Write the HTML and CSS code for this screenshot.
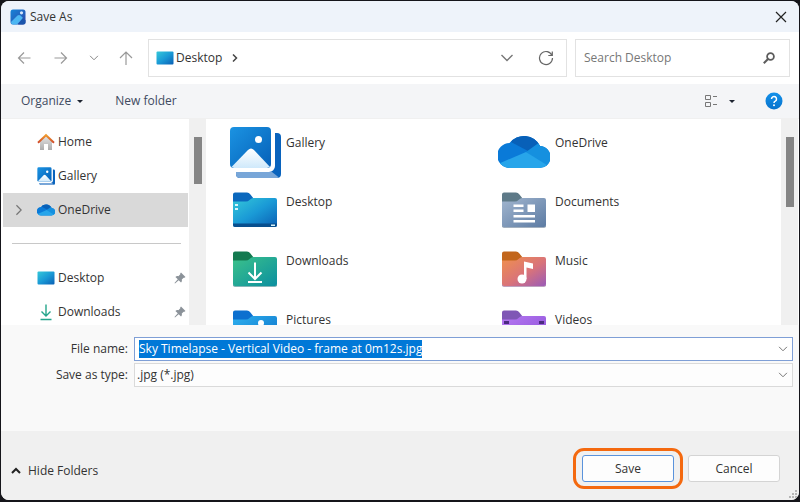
FILE: index.html
```html
<!DOCTYPE html>
<html lang="en">
<head>
<meta charset="utf-8">
<meta name="viewport" content="width=device-width, initial-scale=1">
<title>Save As</title>
<link rel="stylesheet" href="styles.css">
</head>
<body>
<svg class="defs" width="0" height="0" aria-hidden="true">
  <defs>
    <linearGradient id="g-app" x1="0" y1="0" x2="1" y2="1"><stop offset="0" stop-color="#1684d8"/><stop offset=".6" stop-color="#2460bd"/><stop offset="1" stop-color="#3b3f9e"/></linearGradient>
    <linearGradient id="g-desk" x1="0" y1="0" x2="1" y2="1"><stop offset="0" stop-color="#35c8d9"/><stop offset=".5" stop-color="#1a9ad6"/><stop offset="1" stop-color="#0a5fb4"/></linearGradient>
    <linearGradient id="g-photo" x1="0" y1="0" x2="1" y2="1"><stop offset="0" stop-color="#1b93e2"/><stop offset="1" stop-color="#0560b8"/></linearGradient>
    <linearGradient id="g-hill" x1="0" y1="0" x2="0" y2="1"><stop offset="0" stop-color="#ffffff"/><stop offset="1" stop-color="#cfe9fb"/></linearGradient>
    <linearGradient id="g-down" x1="0" y1="0" x2="1" y2="1"><stop offset="0" stop-color="#3cc28a"/><stop offset="1" stop-color="#0b8fa0"/></linearGradient>
    <linearGradient id="g-pic" x1="0" y1="0" x2="1" y2="1"><stop offset="0" stop-color="#2fb0ee"/><stop offset="1" stop-color="#0a70c8"/></linearGradient>
    <linearGradient id="g-doc" x1="0" y1="0" x2="1" y2="1"><stop offset="0" stop-color="#a2b6cf"/><stop offset="1" stop-color="#5c7ba3"/></linearGradient>
    <linearGradient id="g-music" x1="0" y1="0" x2="1" y2="1"><stop offset="0" stop-color="#f0914c"/><stop offset=".55" stop-color="#d9737a"/><stop offset="1" stop-color="#9a5bb8"/></linearGradient>
    <linearGradient id="g-vid" x1="0" y1="0" x2="1" y2="1"><stop offset="0" stop-color="#b678f2"/><stop offset="1" stop-color="#8a4fd6"/></linearGradient>
    <linearGradient id="g-help" x1="0" y1="0" x2="0" y2="1"><stop offset="0" stop-color="#1391ea"/><stop offset="1" stop-color="#0873cc"/></linearGradient>
    <linearGradient id="g-house" x1="0" y1="0" x2="0" y2="1"><stop offset="0" stop-color="#e4e4e4"/><stop offset="1" stop-color="#acacac"/></linearGradient>
    <linearGradient id="g-roof" x1="0" y1="0" x2="0" y2="1"><stop offset="0" stop-color="#f09a2c"/><stop offset="1" stop-color="#cf4a2c"/></linearGradient>
    <clipPath id="c-cloud"><path d="M12 43a11.500 11.500 0 0 1-.5-25A18 18 0 0 1 42 21A11 11 0 0 1 41 43z"/></clipPath>
    <symbol id="cloud" viewBox="0 1 52 52">
      <g clip-path="url(#c-cloud)">
        <path d="M0 0h52v52H0z" fill="#0a7ad8"/>
        <path d="M13 17L20 4h24v17L30 26z" fill="#0860b8"/>
        <path d="M28 27l14-10 10 4v24z" fill="#1590df"/>
        <path d="M0 39l28-12 24 15v4H0z" fill="#27a5ea"/>
      </g>
    </symbol>
    <symbol id="photos" viewBox="0 0 52 52">
      <path d="M46 7h2a4 4 0 0 1 4 4v37a4 4 0 0 1-4 4H11a4 4 0 0 1-4-4v-2h33a6 6 0 0 0 6-6z" fill="#0963bd"/>
      <path d="M7 46h36l7 5.500-2 .5H11a4 4 0 0 1-4-4z" fill="#78a6d8"/>
      <rect x="1" y="1" width="41" height="41" rx="4" fill="url(#g-photo)"/>
      <path d="M2.500 41L19 24q3-3 6 0l16 17-3 1H5z" fill="url(#g-hill)"/>
      <circle cx="29.500" cy="13.500" r="3.500" fill="#fff"/>
    </symbol>
    <symbol id="screen" viewBox="0 0 18 14"><rect x="0.500" y="0.500" width="17" height="13" rx="1" fill="url(#g-desk)"/></symbol>
    <symbol id="chevron" viewBox="0 0 14 14"><path d="M1.500 4l5.500 5.500L12.500 4" fill="none" stroke="currentColor" stroke-width="1.400"/></symbol>
    <symbol id="pin" viewBox="0 0 12 12"><path d="M7 .5L11.500 5l-1 .8-.8-.1L7.800 7.600c.3 1.300 0 2.200-.8 3L4.700 8.200 1 11.500l-.5-.5 3.300-3.700L1.400 5c.8-.8 1.800-1.100 3-.8L6.300 2.300l-.1-.8z" fill="#8b9299"/></symbol>
  </defs>
</svg>

<div class="dialog">
  <header class="titlebar">
    <svg class="app-icon" viewBox="0 0 16 16" width="16" height="16" aria-hidden="true">
      <rect x=".5" y=".5" width="15" height="15" rx="2.500" fill="url(#g-app)"/>
      <path d="M1 13l6.500-6.500q1.500-1.200 3 0L13 9l-6 6.500H3q-2 0-2-2.500z" fill="#4cb6f2"/>
      <path d="M8 15.500L13 9l2.500 2.500V13q0 2.500-2.500 2.500z" fill="#1a55ac"/>
      <circle cx="11.500" cy="3.800" r="1.600" fill="#d6e6fa"/>
    </svg>
    <h1>Save As</h1>
    <button class="icon-btn close" aria-label="Close">
      <svg viewBox="0 0 12 12" width="12" height="12"><path d="M1 1l10 10M11 1L1 11" stroke="#222" stroke-width="1.200"/></svg>
    </button>
  </header>

  <nav class="navbar" aria-label="Navigation">
    <div class="history">
      <button class="icon-btn" aria-label="Back"><svg viewBox="0 0 14 14" width="14" height="14"><path d="M13.500 7H1.500M7 1.500L1.500 7 7 12.500" fill="none" stroke="#999" stroke-width="1.200"/></svg></button>
      <button class="icon-btn" aria-label="Forward"><svg viewBox="0 0 14 14" width="14" height="14"><path d="M.5 7h12M7 1.500L12.500 7 7 12.500" fill="none" stroke="#999" stroke-width="1.200"/></svg></button>
      <button class="icon-btn recent" aria-label="Recent locations"><svg width="10" height="10"><use href="#chevron"/></svg></button>
      <button class="icon-btn" aria-label="Up"><svg viewBox="0 0 14 14" width="14" height="14"><path d="M7 14V1M1 7l6-6 6 6" fill="none" stroke="#999" stroke-width="1.200"/></svg></button>
    </div>
    <div class="address">
      <svg class="place" width="18" height="14" aria-hidden="true"><use href="#screen"/></svg>
      <a href="#">Desktop</a>
      <svg class="crumb" viewBox="0 0 6 8" width="6" height="8" aria-hidden="true"><path d="M1 .5L4.500 4 1 7.500" fill="none" stroke="#444" stroke-width="1.500"/></svg>
      <button class="icon-btn expand" aria-label="Previous locations"><svg width="14" height="14"><use href="#chevron"/></svg></button>
      <button class="icon-btn" aria-label="Refresh"><svg viewBox="0 0 16 16" width="16" height="16"><path d="M14 5.500A6.500 6.500 0 1 0 14.500 8M14.300 1.500v4h-4" fill="none" stroke="#666" stroke-width="1.200"/></svg></button>
    </div>
    <form class="search">
      <input type="search" placeholder="Search Desktop" aria-label="Search Desktop">
      <svg viewBox="0 0 12 12" width="12" height="12" aria-hidden="true"><circle cx="7.500" cy="4.500" r="3.400" fill="none" stroke="#5c5c5c" stroke-width="1.800"/><path d="M5 7L.8 11.200" stroke="#5c5c5c" stroke-width="2"/></svg>
    </form>
  </nav>

  <div class="toolbar">
    <button class="organize">Organize<span class="caret"></span></button>
    <button>New folder</button>
    <button class="view" aria-label="Change view">
      <svg viewBox="0 0 14 14" width="14" height="14"><path d="M1.500 1.500h5v4h-5zM1.500 8.500h5v4h-5z" fill="none" stroke="#777"/><path d="M9 2.500h4M9 10.500h4" stroke="#777"/></svg>
      <span class="caret"></span>
    </button>
    <button class="help" aria-label="Help">
      <svg viewBox="0 0 18 18" width="18" height="18"><circle cx="9" cy="9" r="8.500" fill="url(#g-help)"/><path d="M6.500 7a2.500 2.500 0 1 1 3.800 2.100Q9 9.800 9 11" fill="none" stroke="#fff" stroke-width="1.500"/><circle cx="9" cy="13.300" r="1" fill="#fff"/></svg>
    </button>
  </div>

  <div class="browser">
    <aside class="sidebar">
      <ul class="tree">
        <li><a href="#">
          <svg viewBox="0 0 18 18" width="18" height="18" aria-hidden="true"><path d="M3 8.500L9 3l6 5.500V17h-4v-6H7v6H3z" fill="url(#g-house)"/><path d="M1 9.800L9 2.200l8 7.600" fill="none" stroke="url(#g-roof)" stroke-width="2"/></svg>
          Home</a></li>
        <li><a href="#"><svg width="18" height="18" aria-hidden="true"><use href="#photos"/></svg>Gallery</a></li>
        <li class="selected"><a href="#"><svg class="twist" width="12" height="12" aria-hidden="true"><use href="#chevron"/></svg><svg width="18" height="18" aria-hidden="true"><use href="#cloud"/></svg>OneDrive</a></li>
        <li class="divider" role="separator"></li>
        <li><a href="#"><svg width="18" height="14" aria-hidden="true"><use href="#screen"/></svg>Desktop<svg class="pin" width="12" height="12" aria-hidden="true"><use href="#pin"/></svg></a></li>
        <li><a href="#">
          <svg viewBox="0 0 18 18" width="18" height="18" aria-hidden="true"><path d="M9 1.500v11M4.500 8.500L9 13l4.500-4.500M3.500 16.500h11" fill="none" stroke="#25a58b" stroke-width="1.400"/></svg>
          Downloads<svg class="pin" width="12" height="12" aria-hidden="true"><use href="#pin"/></svg></a></li>
      </ul>
      <div class="scrollbar"><div class="thumb short"></div></div>
    </aside>

    <main class="files">
      <ul class="grid">
        <li><svg width="52" height="52" aria-hidden="true"><use href="#photos"/></svg><span>Gallery</span></li>
        <li><svg width="52" height="52" aria-hidden="true"><use href="#cloud"/></svg><span>OneDrive</span></li>
        <li>
          <svg viewBox="0 0 52 52" width="52" height="52" aria-hidden="true"><path d="M4 20V9.500Q4 7.500 6 7.500h12q2 0 3 1.500l4 5-4 6z" fill="#0b68bd"/><path d="M4 16.500h13q2 0 3.500-1.500t3.500-2h22q2 0 2 2v25q0 2-2 2H6q-2 0-2-2z" fill="url(#g-desk)"/><path d="M4 38.500h44V40q0 2-2 2H6q-2 0-2-2z" fill="#084f8e"/><path d="M6 19h3v2H6zM6 23h3v2H6zM42 39.500h4v1.500h-4z" fill="#d8f5fb"/></svg>
          <span>Desktop</span></li>
        <li>
          <svg viewBox="0 0 52 52" width="52" height="52" aria-hidden="true"><path d="M4 20V9.500Q4 7.500 6 7.500h12q2 0 3 1.500l4 5-4 6z" fill="#5e7a88"/><path d="M4 16.500h13q2 0 3.500-1.500t3.500-2h22q2 0 2 2v25q0 2-2 2H6q-2 0-2-2z" fill="url(#g-doc)"/><path d="M4 40q0 2 2 2h40q2 0 2-2v1q0 1.500-2 1.500H6q-2 0-2-1.500z" fill="#48637f"/><path d="M15.500 19.500h10v2.500h-10zM15.500 24.500h10V27h-10zM29.500 19.500h7.500V27h-7.500zM15.500 30h21.500v2.500H15.500zM15.500 35h21.500v2.500H15.500z" fill="#fff"/></svg>
          <span>Documents</span></li>
        <li>
          <svg viewBox="0 0 52 52" width="52" height="52" aria-hidden="true"><path d="M4 20V9.500Q4 7.500 6 7.500h12q2 0 3 1.500l4 5-4 6z" fill="#147a50"/><path d="M4 16.500h13q2 0 3.500-1.500t3.500-2h22q2 0 2 2v25q0 2-2 2H6q-2 0-2-2z" fill="url(#g-down)"/><path d="M4 40q0 2 2 2h40q2 0 2-2v1q0 1.500-2 1.500H6q-2 0-2-1.500z" fill="#0c6d70"/><path d="M26 18.500v16M19.500 28.500L26 35l6.500-6.500M19 38h14" fill="none" stroke="#fff" stroke-width="2"/></svg>
          <span>Downloads</span></li>
        <li>
          <svg viewBox="0 0 52 52" width="52" height="52" aria-hidden="true"><path d="M4 20V9.500Q4 7.500 6 7.500h12q2 0 3 1.500l4 5-4 6z" fill="#c2661c"/><path d="M4 16.500h13q2 0 3.500-1.500t3.500-2h22q2 0 2 2v25q0 2-2 2H6q-2 0-2-2z" fill="url(#g-music)"/><path d="M4 40q0 2 2 2h40q2 0 2-2v1q0 1.500-2 1.500H6q-2 0-2-1.500z" fill="#7e4780"/><path d="M26 17.500l9 2V25l-6.500-1.500V35H26z" fill="#fff"/><circle cx="24" cy="35" r="4.500" fill="#fff"/></svg>
          <span>Music</span></li>
        <li>
          <svg viewBox="0 0 52 52" width="52" height="52" aria-hidden="true"><path d="M4 20V9.500Q4 7.500 6 7.500h12q2 0 3 1.500l4 5-4 6z" fill="#0d70cf"/><path d="M4 16.500h13q2 0 3.500-1.500t3.500-2h22q2 0 2 2v25q0 2-2 2H6q-2 0-2-2z" fill="url(#g-pic)"/><circle cx="32" cy="20" r="3" fill="#fff"/><path d="M14 37l10-11q2-2 4 0l10 11z" fill="#fff"/></svg>
          <span>Pictures</span></li>
        <li>
          <svg viewBox="0 0 52 52" width="52" height="52" aria-hidden="true"><path d="M4 20V9.500Q4 7.500 6 7.500h12q2 0 3 1.500l4 5-4 6z" fill="#7f57b5"/><path d="M4 16.500h13q2 0 3.500-1.500t3.500-2h22q2 0 2 2v25q0 2-2 2H6q-2 0-2-2z" fill="url(#g-vid)"/><path d="M6 18h5v3H6zM41 18h5v3h-5zM6 25h5v3H6zM41 25h5v3h-5z" fill="#4b2a80"/><path d="M21 22l12 7-12 7z" fill="#fff"/></svg>
          <span>Videos</span></li>
      </ul>
      <div class="scrollbar"><div class="thumb"></div></div>
    </main>
  </div>

  <form class="fields">
    <label for="name">File name:</label>
    <div class="combo active">
      <input id="name" type="text" value="Sky Timelapse - Vertical Video - frame at 0m12s.jpg">
      <svg width="10" height="10" aria-hidden="true"><use href="#chevron"/></svg>
    </div>
    <label for="type">Save as type:</label>
    <div class="combo">
      <select id="type"><option>.jpg (*.jpg)</option></select>
      <svg width="10" height="10" aria-hidden="true"><use href="#chevron"/></svg>
    </div>
  </form>

  <footer class="footer">
    <button class="hide"><svg viewBox="0 0 10 8" width="10" height="8" aria-hidden="true"><path d="M1 6l4-4 4 4" fill="none" stroke="#222" stroke-width="2"/></svg>Hide Folders</button>
    <button class="btn primary">Save</button>
    <button class="btn">Cancel</button>
    <svg class="grip" viewBox="0 0 8 8" width="8" height="8" aria-hidden="true"><path d="M6 0h2v2H6zM3 3h2v2H3zM6 3h2v2H6zM0 6h2v2H0zM3 6h2v2H3zM6 6h2v2H6z" fill="#b5b5b5"/></svg>
  </footer>
</div>
<script src="script.js"></script>
</body>
</html>
```

FILE: styles.css
```css
* {
  box-sizing: border-box;
}

body {
  margin: 0;
  min-height: 100vh;
  padding: 1px 1px 2px;
  display: flex;
  background: #15151a;
  color: #333;
  font: 12px/18px "Open Sans", "Noto Sans", sans-serif;
}

.defs {
  position: absolute;
}

button,
input,
select {
  margin: 0;
  padding: 0;
  border: 0;
  background: none;
  color: inherit;
  font: inherit;
  outline: 0;
}

a {
  color: inherit;
  text-decoration: none;
}

ul {
  margin: 0;
  padding: 0;
  list-style: none;
}

svg {
  display: block;
  flex: none;
}

.dialog {
  flex: 1;
  min-width: 0;
  display: flex;
  flex-direction: column;
  border-radius: 8px;
  background: #f9f9f9;
  overflow: hidden;
}

/* Title bar */
.titlebar {
  display: flex;
  align-items: center;
  gap: 4px;
  height: 31px;
  padding: 0 12px 0 9px;
  background: #eef3fa;
}

.titlebar h1 {
  margin: 0;
  font-size: 12px;
  font-weight: 400;
}

.icon-btn {
  display: flex;
  align-items: center;
  justify-content: center;
}

.close {
  margin-left: auto;
}

/* Navigation */
.navbar {
  display: flex;
  align-items: center;
  height: 52px;
  padding: 0 9px 0 16px;
  background: #fff;
}

.history {
  display: flex;
  align-items: center;
  gap: 23px;
  width: 131px;
  color: #888;
}

.recent {
  margin: 0 -3px 0 -2px;
}

.address,
.search {
  display: flex;
  align-items: center;
  height: 38px;
  border: 1px solid #e2e2e2;
}

.address {
  flex: 1;
  padding: 0 12px 0 7px;
}

.place {
  margin-right: 2px;
}

.crumb {
  margin-left: 10px;
}

.expand {
  margin-left: auto;
  margin-right: 24px;
  color: #777;
}

.search {
  width: 215px;
  margin-left: 8px;
  padding: 0 14px 0 8px;
}

.search input {
  flex: 1;
  min-width: 0;
}

.search input::placeholder {
  color: #777;
}

/* Toolbar */
.toolbar {
  display: flex;
  align-items: center;
  height: 35px;
  padding: 0 16px 0 20px;
  background: #f4f5f7;
  border-bottom: 1px solid #f0f0f0;
  color: #3e4a60;
}

.organize {
  display: flex;
  align-items: center;
  gap: 6px;
  margin-right: 32px;
}

.caret {
  border: 3px solid transparent;
  border-top-color: #1d2430;
  border-bottom: 0;
}

.view {
  display: flex;
  align-items: center;
  gap: 11px;
  margin-left: auto;
}

.help {
  margin-left: 30px;
}

/* Folder tree and file area */
.browser {
  display: flex;
  flex: 1 1 0;
  min-height: 0;
  overflow: hidden;
  background: #fff;
}

.sidebar {
  display: flex;
  width: 205px;
  padding-left: 2px;
}

.tree {
  flex: 1;
  padding-top: 6px;
}

.tree li {
  height: 34px;
  margin-right: 1px;
}

.tree a {
  position: relative;
  display: flex;
  align-items: center;
  gap: 3px;
  height: 100%;
  padding: 0 2px 0 34px;
}

.tree .selected {
  background: #d9d9d9;
}

.twist {
  position: absolute;
  left: 10px;
  color: #777;
  transform: rotate(-90deg);
}

.tree .divider {
  height: 17px;
  margin: 0 8px 17px 9px;
  border-bottom: 1px solid #c8c8c8;
}

.pin {
  margin-left: auto;
}

.scrollbar {
  width: 17px;
  padding: 18px 4px 0 5px;
  background: #f0f0f0;
}

.thumb {
  height: 70px;
  background: #858585;
}

.thumb.short {
  height: 47px;
}

.files {
  display: flex;
  flex: 1;
  padding-right: 1px;
}

.grid {
  flex: 1;
  display: grid;
  grid-template-columns: 269px 269px;
  grid-auto-rows: 59px;
  align-content: start;
  padding: 7px 0 0 23px;
}

.grid li {
  display: flex;
  gap: 5px;
}

.grid span {
  padding-top: 8px;
}

/* Name and type fields */
.fields {
  display: grid;
  grid-template-columns: 127px 1fr;
  gap: 2px 6px;
  align-items: center;
  height: 106px;
  align-content: start;
  padding: 12px 6px 0 0;
}

.fields label {
  text-align: right;
}

.combo {
  display: flex;
  align-items: center;
  height: 24px;
  padding: 0 4px 0 2px;
  border: 1px solid #dadada;
  background: #fdfdfd;
}

.combo.active {
  padding-left: 4px;
  border-color: #7f9fd6;
  background: #fff;
}

.combo input,
.combo select {
  flex: 1;
  min-width: 0;
  appearance: none;
}

.combo svg {
  color: #777;
}

.combo input::selection {
  background: #0078d7;
  color: #fff;
}

/* Footer */
.footer {
  position: relative;
  display: flex;
  align-items: center;
  gap: 14px;
  height: 69px;
  padding: 6px 19px 0 10px;
  background: #f0f0f0;
}

.hide {
  display: flex;
  align-items: center;
  gap: 7px;
  margin-right: auto;
  padding-top: 4px;
}

.btn {
  position: relative;
  width: 92px;
  height: 27px;
  border: 1px solid #d4d4d4;
  border-radius: 3px;
  background: #fdfdfd;
}

.primary {
  border-color: #5a93dc;
}

.primary::after {
  content: "";
  position: absolute;
  inset: -8px -10px;
  border: 3px solid #f4690f;
  border-radius: 11px;
}

.grip {
  position: absolute;
  right: 2px;
  bottom: 2px;
}
```

FILE: script.js
```js
const nameField = document.getElementById("name");
nameField.focus();
nameField.select();
```
